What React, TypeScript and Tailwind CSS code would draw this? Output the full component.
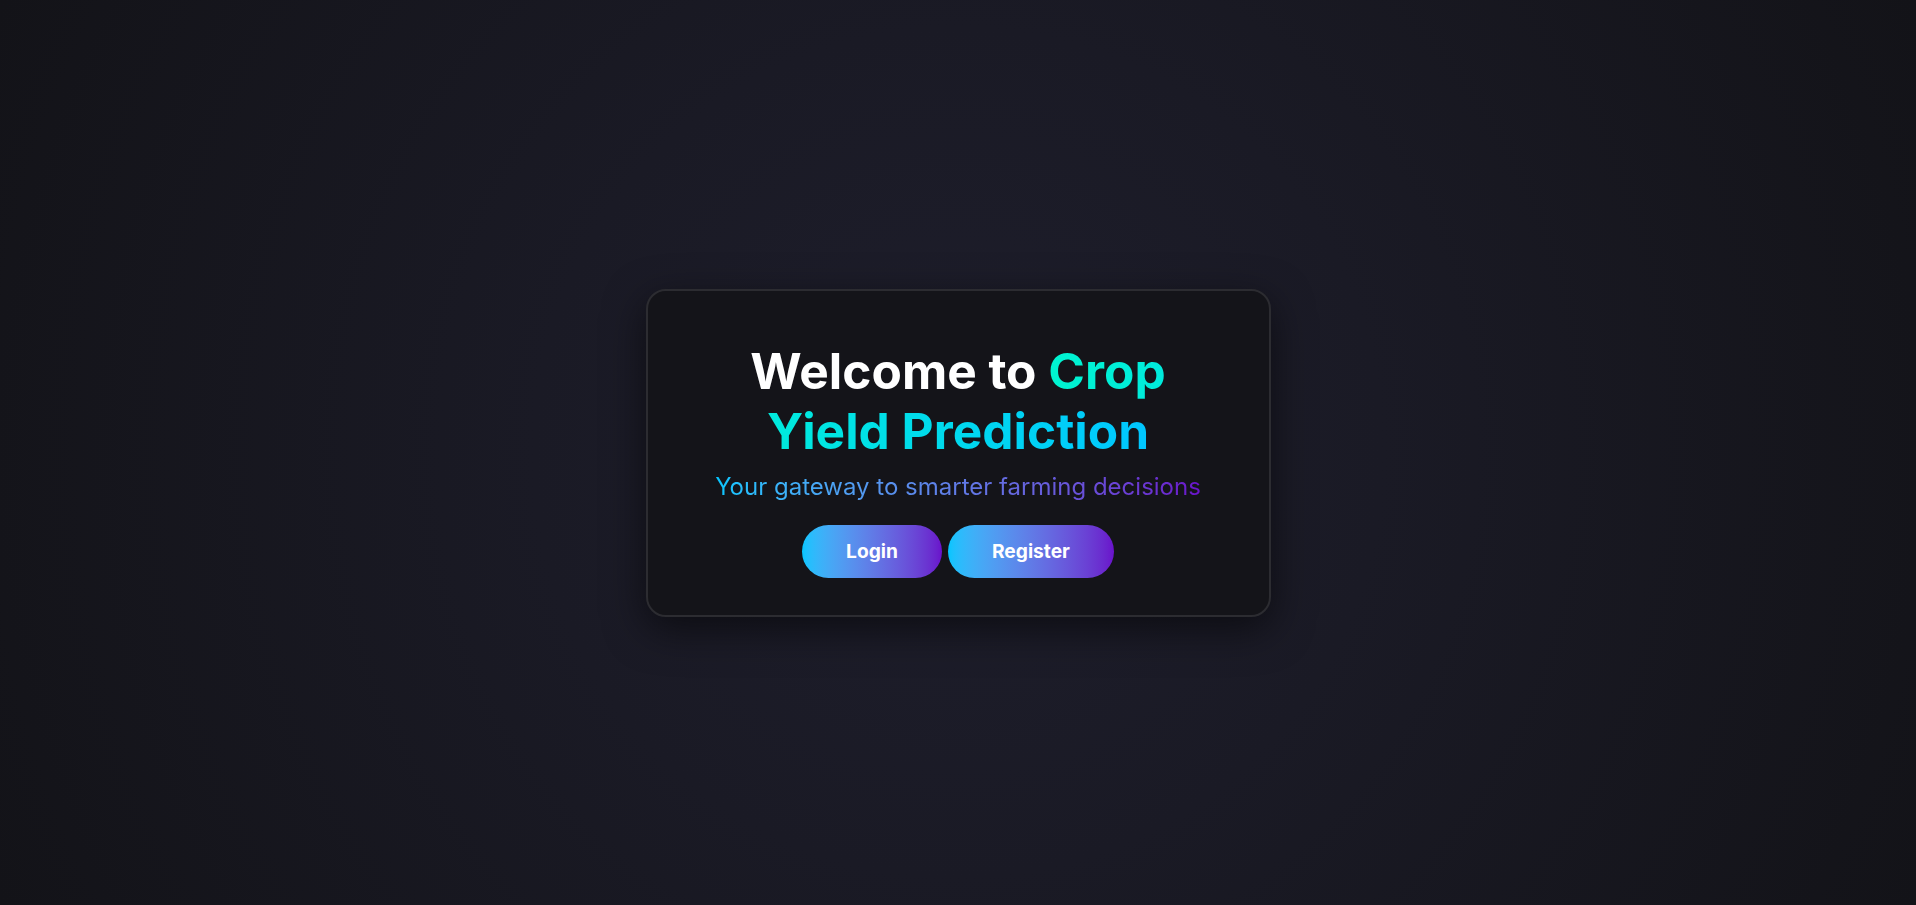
import React from "react";

const App = () => {
   return (
      <div className="min-h-screen w-full flex items-center justify-center bg-[radial-gradient(circle_at_center,#1e1e2c_0%,#1a1a25_40%,#131318_100%)] font-['Inter','Noto_Sans',sans-serif]">
         {/* card */}
         <div className="w-[625px] rounded-[20px] border-2 border-[#2c2c31] bg-[#141419] pt-[50px] pb-[37px] px-12 text-center shadow-[0_12px_40px_rgba(0,0,0,0.55)]">
            <h1 className="text-[49.6px] leading-[60px] font-[700] text-white">
               Welcome to{" "}
               <span className="bg-linear-to-r from-[#00f5d0] to-[#00c6ff] bg-clip-text text-transparent">
                  Crop Yield Prediction
               </span>
            </h1>
            <p className="mt-[8px] text-[24px] leading-[36px] font-[400]">
               <span className="bg-linear-to-r from-[#00c6ff] to-[#6a11cb] bg-clip-text text-transparent">
                  Your gateway to smarter farming decisions
               </span>
            </p>

            <div className="mt-[20px] flex items-center justify-center gap-[6px]">
               <button className="h-[53px] px-[44px] rounded-full bg-linear-to-r from-[#00c6ff] to-[#6a11cb] text-white font-[700] text-[19.2px]">
                  Login
               </button>
               <button className="h-[53px] px-[44px] rounded-full bg-linear-to-r from-[#00c6ff] to-[#6a11cb] text-white font-[700] text-[19.2px]">
                  Register
               </button>
            </div>
         </div>
      </div>
   );
};

export default App;
